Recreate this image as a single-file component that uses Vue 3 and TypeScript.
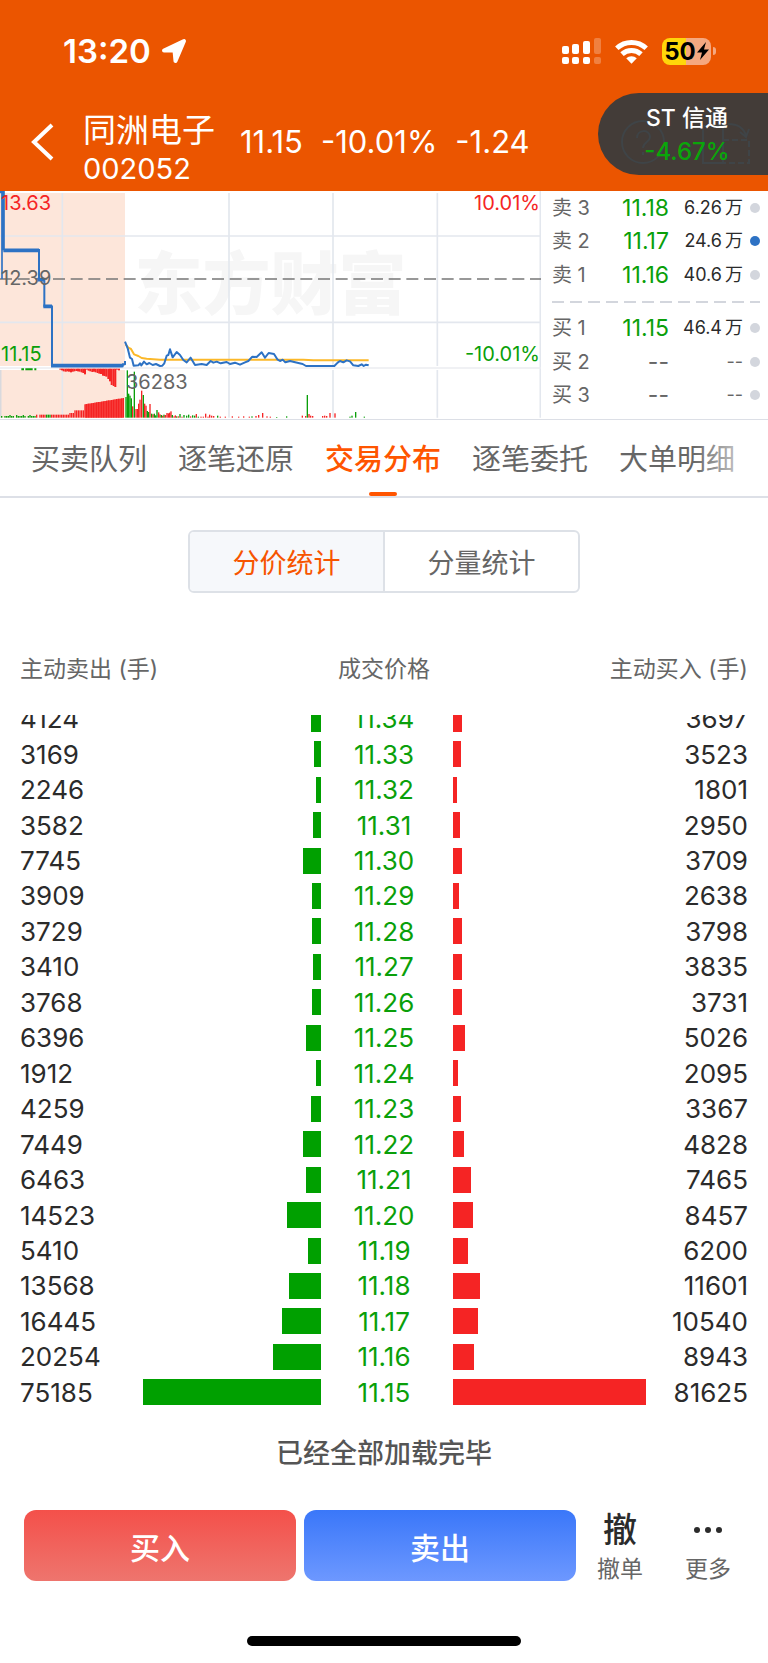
<script setup lang="ts">
interface Level {
  name: string
  price: string
  volume: string
  unit?: string
  active?: boolean
}

interface PriceRow {
  sell: number
  price: string
  buy: number
}

interface Bar {
  x: number
  h: number
  up: boolean
}

const asks: Level[] = [
  { name: '卖 3', price: '11.18', volume: '6.26', unit: '万' },
  { name: '卖 2', price: '11.17', volume: '24.6', unit: '万', active: true },
  { name: '卖 1', price: '11.16', volume: '40.6', unit: '万' },
]

const bids: Level[] = [
  { name: '买 1', price: '11.15', volume: '46.4', unit: '万' },
  { name: '买 2', price: '--', volume: '--' },
  { name: '买 3', price: '--', volume: '--' },
]

const tabs: string[] = ['买卖队列', '逐笔还原', '交易分布', '逐笔委托', '大单明细']
const activeTab = '交易分布'

const rows: PriceRow[] = [
  { sell: 4124, price: '11.34', buy: 3697 },
  { sell: 3169, price: '11.33', buy: 3523 },
  { sell: 2246, price: '11.32', buy: 1801 },
  { sell: 3582, price: '11.31', buy: 2950 },
  { sell: 7745, price: '11.30', buy: 3709 },
  { sell: 3909, price: '11.29', buy: 2638 },
  { sell: 3729, price: '11.28', buy: 3798 },
  { sell: 3410, price: '11.27', buy: 3835 },
  { sell: 3768, price: '11.26', buy: 3731 },
  { sell: 6396, price: '11.25', buy: 5026 },
  { sell: 1912, price: '11.24', buy: 2095 },
  { sell: 4259, price: '11.23', buy: 3367 },
  { sell: 7449, price: '11.22', buy: 4828 },
  { sell: 6463, price: '11.21', buy: 7465 },
  { sell: 14523, price: '11.20', buy: 8457 },
  { sell: 5410, price: '11.19', buy: 6200 },
  { sell: 13568, price: '11.18', buy: 11601 },
  { sell: 16445, price: '11.17', buy: 10540 },
  { sell: 20254, price: '11.16', buy: 8943 },
  { sell: 75185, price: '11.15', buy: 81625 },
]

const peak = Math.max(...rows.map((r) => Math.max(r.sell, r.buy)))
const barWidth = (value: number) => ({ width: `${(value / peak) * 100}%` })

// Chart space: three units per pixel, volume baseline at y = 698.
const auctionBars: Bar[] = []
for (let x = 3; x < 372; x += 5) {
  if (x < 104) {
    if (x % 7 !== 1) auctionBars.push({ x, h: x % 4 === 0 ? 8 : 5, up: false })
  } else if (x < 208) {
    if (x !== 113) auctionBars.push({ x, h: 9, up: x < 138 || x > 148 })
  } else if (x < 253) {
    auctionBars.push({ x, h: x < 221 ? 14 : 22, up: true })
  } else {
    auctionBars.push({ x, h: 40 + Math.round(((x - 253) * 19) / 115), up: true })
  }
}

const unmatchedDepths: number[] = [
  3, 5, 8, 9, 8, 9, 11, 9, 8, 7, 8, 9, 11, 13, 17, 3, 6, 8, 10, 9, 11, 13, 15, 16, 21, 22, 24, 31, 38, 49, 52, 55, 3, 5,
]
const unmatchedBars: Bar[] = unmatchedDepths.map((h, i) => ({ x: 178 + i * 5 + Math.floor(i / 3), h, up: true }))

const tradeBars: Bar[] = [
  [378, 62, 0], [382, 142, 0], [386, 72, 0], [390, 66, 0], [394, 58, 0], [398, 34, 1], [403, 138, 0], [408, 26, 1],
  [412, 26, 1], [416, 42, 1], [420, 54, 1], [425, 81, 1], [430, 68, 0], [434, 42, 1], [438, 36, 1], [442, 20, 0],
  [446, 17, 0], [450, 41, 1], [455, 12, 0], [459, 10, 1], [463, 12, 0], [467, 7, 0], [471, 23, 0], [476, 16, 1],
  [480, 10, 1], [484, 8, 0], [488, 6, 1], [492, 9, 0], [496, 8, 1], [501, 14, 1], [505, 13, 1], [509, 15, 1],
  [513, 19, 1], [517, 8, 0], [522, 4, 1], [526, 7, 1], [530, 4, 0], [535, 4, 1], [540, 11, 0], [546, 3, 1],
  [552, 8, 0], [560, 6, 0], [566, 9, 0], [572, 4, 1], [578, 7, 0], [584, 6, 0], [589, 11, 1], [595, 3, 0],
  [603, 3, 1], [610, 3, 1], [617, 12, 1], [624, 3, 1], [629, 9, 1], [635, 6, 1], [641, 5, 1], [653, 6, 0],
  [661, 3, 1], [676, 3, 1], [697, 4, 1], [716, 3, 1], [731, 4, 1], [748, 3, 1], [756, 4, 0], [768, 5, 1],
  [776, 8, 1], [788, 14, 1], [801, 4, 1], [811, 3, 1], [830, 2, 0], [860, 4, 0], [907, 6, 1], [917, 5, 1],
  [922, 68, 0], [927, 11, 1], [932, 6, 1], [938, 5, 1], [968, 5, 1], [974, 6, 1], [980, 5, 1], [990, 14, 1],
  [1005, 13, 1], [1050, 3, 0], [1056, 6, 0], [1067, 17, 0], [1093, 3, 0],
].map(([x, h, up]) => ({ x, h, up: up === 1 }))

const priceLine =
  '375,470 383,490 390,518 396,522 401,542 415,541 420,535 424,541 432,530 440,538 448,534 458,540 468,537 480,543 487,542 493,535 500,512 505,510 510,493 518,517 530,501 540,510 550,525 560,532 572,518 585,540 605,537 620,540 632,528 640,533 650,530 662,535 680,531 690,537 705,533 720,539 735,532 745,528 757,515 770,516 785,502 795,518 806,504 822,507 832,523 840,528 848,524 856,532 870,528 895,534 908,537 918,543 1003,543 1013,533 1020,528 1030,532 1040,526 1050,529 1060,541 1075,543 1085,538 1091,543 1098,539 1106,541'
const averageLine =
  '377,478 385,488 393,492 402,508 415,513 425,519 440,521 480,524 910,524 940,526 1106,526'
</script>

<template>
  <div class="page">
    <header class="top">
      <div class="status">
        <div class="clock">
          <span>13:20</span>
          <svg class="arrow" viewBox="0 0 26 26" aria-hidden="true">
            <path d="M3 12.500 23 3 14.500 23 13.500 12.500z" fill="#fff" stroke="#fff" stroke-width="4" stroke-linejoin="round" />
          </svg>
        </div>
        <div class="signals">
          <svg class="cell" viewBox="0 0 39 28" aria-hidden="true">
            <g fill="#fff">
              <rect x="0" y="9" width="7" height="8" rx="2" />
              <rect x="10" y="7" width="7" height="10" rx="2" />
              <rect x="21" y="4" width="7" height="13" rx="2" />
              <rect x="0" y="20" width="7" height="7" rx="2" />
              <rect x="10" y="20" width="7" height="7" rx="2" />
              <rect x="21" y="20" width="7" height="7" rx="2" />
              <g opacity=".25">
                <rect x="32" y="1" width="7" height="16" rx="2" />
                <rect x="32" y="20" width="7" height="7" rx="2" />
              </g>
            </g>
          </svg>
          <svg class="wifi" viewBox="0 0 33 25" aria-hidden="true">
            <g fill="none" stroke="#fff" stroke-width="5">
              <path d="M1.800 9.200a21.500 21.500 0 0 1 29.400 0" />
              <path d="M7 15.200a14 14 0 0 1 19 0" />
            </g>
            <path d="M11.200 19.300a8 8 0 0 1 10.600 0L16.500 24.800z" fill="#fff" />
          </svg>
          <div class="battery">
            <span>50</span>
            <svg viewBox="0 0 12 18" aria-hidden="true"><path d="M9 0 0 10.500h5L3 18l9-10.500H7z" /></svg>
          </div>
        </div>
      </div>

      <div class="quote">
        <button class="back" type="button" aria-label="返回">
          <svg viewBox="0 0 24 40" aria-hidden="true"><path d="M21 3 3 20l18 17" fill="none" stroke="#fff" stroke-width="4" /></svg>
        </button>
        <h1 class="stock">
          <span class="name">同洲电子</span>
          <span class="code">002052</span>
        </h1>
        <p class="figures"><span>11.15</span><span>-10.01%</span><span>-1.24</span></p>
      </div>

      <a class="pill" href="#st">
        <svg class="ghost" viewBox="0 0 130 46" aria-hidden="true">
          <g fill="none" stroke="#3f4447" stroke-width="2">
            <circle cx="23" cy="23" r="21" />
            <path d="M17 19c0-9 13-9 13-1 0 5-7 5-7 11M23 33v3" />
            <path d="M83 7h20v37H83z" />
            <path d="M103 21h26v23h-26" stroke-dasharray="6 3" />
            <path d="M108 5c9 0 16 4 18 12m-6-4 6 5 3-8" />
          </g>
        </svg>
        <span class="pill-name">ST 信通</span>
        <span class="pill-change">-4.67%</span>
      </a>
    </header>

    <section class="market">
      <div class="chart">
        <span class="mark">东方财富</span>
        <svg viewBox="0 18 1623 684" aria-hidden="true">
          <rect x="0" y="24" width="375" height="519" fill="#fde6da" />
          <rect x="0" y="555" width="375" height="143" fill="#fde6da" />
          <g stroke="#e3e7ee" stroke-width="5">
            <path d="M187 24V543M187 555V698M687 24V543M687 555V698M999 24V543M999 555V698M1312 24V543M1312 555V698M1621 18V698" />
            <path d="M0 153H1623M0 412H1623" />
            <path d="M0 549H1623" stroke="#ebedf1" />
            <path d="M2 555V698" stroke="#d9d9dd" />
          </g>
          <path d="M0 282H1623" stroke="#777" stroke-width="5" stroke-dasharray="36 17" />
          <g>
            <rect v-for="b in auctionBars" :key="'a' + b.x" :x="b.x" :y="698 - b.h" width="4" :height="b.h" :fill="b.up ? '#f52424' : '#0a9f0a'" />
            <path d="M255 698V658L370 640V698z" fill="#f52424" opacity=".7" />
            <rect v-for="b in unmatchedBars" :key="'u' + b.x" :x="b.x" y="551" width="6" :height="b.h" fill="#f52424" />
            <path d="M64 553H72M76 553H98M103 553H109" stroke="#0a9f0a" stroke-width="6" />
            <rect v-for="b in tradeBars" :key="'t' + b.x" :x="b.x - 2" :y="698 - b.h" width="4" :height="b.h" :fill="b.up ? '#f52424' : '#0a9f0a'" />
          </g>
          <g fill="none" stroke="#2d72c4" stroke-linejoin="round">
            <path d="M6 20V282" stroke-width="5" />
            <path d="M0 20H10V196" stroke-width="9" />
            <path d="M10 196H117M112 284H133M130 364H156M153 542H366V538" stroke-width="11" />
            <path d="M117 192V284H133V364H156V542M366 538H375V528" stroke-width="6" />
            <polyline :points="averageLine" stroke="#fbb829" stroke-width="6" />
            <polyline :points="priceLine" stroke-width="6" />
          </g>
        </svg>
        <span class="label high">13.63</span>
        <span class="label mid">12.39</span>
        <span class="label low">11.15</span>
        <span class="label high right">10.01%</span>
        <span class="label low right">-10.01%</span>
        <span class="label volume">36283</span>
      </div>

      <div class="book">
        <div v-for="l in asks" :key="l.name" class="level">
          <span class="side">{{ l.name }}</span>
          <span class="price">{{ l.price }}</span>
          <span class="lots">{{ l.volume }}<i>{{ l.unit }}</i></span>
          <span class="dot" :class="{ on: l.active }"></span>
        </div>
        <svg class="split" aria-hidden="true"><line x1="0" y1="1" x2="100%" y2="1" stroke="#d3d6dd" stroke-width="2" stroke-dasharray="12 6" /></svg>
        <div v-for="l in bids" :key="l.name" class="level">
          <span class="side">{{ l.name }}</span>
          <span class="price" :class="{ empty: !l.unit }">{{ l.price }}</span>
          <span class="lots" :class="{ empty: !l.unit }">{{ l.volume }}<i v-if="l.unit">{{ l.unit }}</i></span>
          <span class="dot"></span>
        </div>
      </div>
    </section>

    <nav class="tabs">
      <button v-for="t in tabs" :key="t" type="button" :class="{ active: t === activeTab }">{{ t }}</button>
    </nav>

    <main class="content">
      <div class="segment">
        <button type="button" class="chosen">分价统计</button>
        <button type="button">分量统计</button>
      </div>

      <table class="stats">
        <thead>
          <tr>
            <th class="sell-head" colspan="2">主动卖出 (手)</th>
            <th class="price-head">成交价格</th>
            <th class="buy-head" colspan="2">主动买入 (手)</th>
          </tr>
        </thead>
        <tbody>
          <tr v-for="r in rows" :key="r.price">
            <td class="num">{{ r.sell }}</td>
            <td class="track sell"><div class="bar" :style="barWidth(r.sell)"></div></td>
            <td class="deal">{{ r.price }}</td>
            <td class="track buy"><div class="bar" :style="barWidth(r.buy)"></div></td>
            <td class="num end">{{ r.buy }}</td>
          </tr>
        </tbody>
      </table>

      <p class="done">已经全部加载完毕</p>
    </main>

    <footer class="actions">
      <button type="button" class="trade buy-btn">买入</button>
      <button type="button" class="trade sell-btn">卖出</button>
      <button type="button" class="tool"><b>撤</b><span>撤单</span></button>
      <button type="button" class="tool">
        <svg viewBox="0 0 30 34" aria-hidden="true"><g fill="#2b2b2b"><circle cx="4" cy="17" r="3" /><circle cx="15" cy="17" r="3" /><circle cx="26" cy="17" r="3" /></g></svg>
        <span>更多</span>
      </button>
    </footer>
    <div class="home"></div>
  </div>
</template>

<style>
body {
  margin: 0;
  background: #fff;
}
</style>

<style scoped>
.page {
  font-family: Inter, "Noto Sans CJK SC", sans-serif;
  color: #2b2b2b;
  background: #fff;
  overflow: hidden;
}

button {
  font: inherit;
  color: inherit;
  border: 0;
  padding: 0;
  background: none;
}

.top {
  position: relative;
  height: 191px;
  background: #eb5500;
  color: #fff;
}

.status {
  display: flex;
  justify-content: space-between;
  align-items: center;
  padding: 31px 52px 0 63px;
  height: 40px;
}

.clock {
  display: flex;
  align-items: center;
  gap: 10px;
  font-size: 33px;
  font-weight: 600;
}

.arrow {
  width: 26px;
  height: 26px;
}

.signals {
  display: flex;
  align-items: center;
  gap: 14px;
}

.cell {
  width: 39px;
  height: 28px;
}

.wifi {
  width: 33px;
  height: 25px;
}

.battery {
  position: relative;
  display: flex;
  align-items: center;
  justify-content: center;
  gap: 1px;
  width: 49px;
  height: 27px;
  margin-right: 5px;
  border-radius: 8px;
  background: linear-gradient(90deg, #ffd60a 50%, #f5a880 50%);
  color: #000;
  font-size: 24px;
  font-weight: 700;
}

.battery::after {
  content: "";
  position: absolute;
  right: -5px;
  width: 3px;
  height: 8px;
  border-radius: 0 4px 4px 0;
  background: #f5a880;
}

.battery svg {
  width: 12px;
  height: 18px;
}

.quote {
  display: flex;
  align-items: flex-start;
  padding: 39px 0 0 31px;
}

.back {
  width: 52px;
  height: 64px;
  display: flex;
  align-items: center;
}

.back svg {
  width: 24px;
  height: 40px;
}

.stock {
  margin: 0;
  width: 157px;
  display: flex;
  flex-direction: column;
  font-weight: 400;
}

.name {
  font-size: 33px;
  line-height: 40px;
}

.code {
  font-size: 29px;
  line-height: 38px;
}

.figures {
  display: flex;
  gap: 18px;
  margin: 0;
  font-size: 31px;
  line-height: 64px;
}

.pill {
  position: absolute;
  right: 0;
  top: 93px;
  width: 170px;
  height: 82px;
  box-sizing: border-box;
  padding: 9px 0 7px 8px;
  border-radius: 41px 0 0 41px;
  background: #433c38;
  color: #fff;
  text-decoration: none;
  display: flex;
  flex-direction: column;
  align-items: center;
  font-size: 23px;
  font-weight: 500;
  line-height: 33px;
}

.ghost {
  position: absolute;
  left: 22px;
  top: 26px;
  width: 130px;
  height: 46px;
}

.pill-name,
.pill-change {
  position: relative;
}

.pill-change {
  color: #0aa60a;
  font-size: 24px;
}

.market {
  display: grid;
  grid-template-columns: 541fr 227fr;
  border-bottom: 1px solid #dcdfe6;
}

.chart {
  position: relative;
}

.chart svg {
  position: relative;
  display: block;
  width: 100%;
}

.mark {
  position: absolute;
  inset: 0 0 51px 0;
  display: flex;
  align-items: center;
  justify-content: center;
  color: #f6f6f6;
  font-size: 68px;
  font-weight: 900;
}

.label {
  position: absolute;
  left: 1px;
  font-size: 20px;
  line-height: 24px;
  color: #666;
}

.label.high {
  top: 0;
  color: #f52424;
}

.label.mid {
  top: 75px;
}

.label.low {
  top: 151px;
  color: #0a9f0a;
}

.label.right {
  left: auto;
  right: 1px;
}

.label.volume {
  left: 126px;
  top: 179px;
}

.book {
  display: flex;
  flex-direction: column;
  padding: 0 8px 7px 11px;
}

.level {
  flex: 1;
  display: grid;
  grid-template-columns: 36px 81fr 74fr 17px;
  align-items: center;
  line-height: 30px;
}

.side {
  font-size: 20px;
  color: #666;
  white-space: nowrap;
}

.price {
  font-size: 23px;
  color: #0a9f0a;
  text-align: right;
}

.lots {
  font-size: 18px;
  text-align: right;
}

.lots i {
  font-style: normal;
  margin-left: 3px;
}

.book .empty {
  color: #666;
}

.dot {
  width: 10px;
  height: 10px;
  border-radius: 5px;
  background: #d3d6dd;
  justify-self: end;
}

.dot.on {
  background: #2d72c4;
}

.split {
  width: 100%;
  height: 2px;
  margin: 9px 0;
}

.tabs {
  position: relative;
  display: flex;
  gap: 31px;
  padding-left: 31px;
  height: 76px;
  border-bottom: 2px solid #dde0e7;
  color: #666;
  font-size: 29px;
  white-space: nowrap;
  overflow: hidden;
}

.tabs::after {
  content: "";
  position: absolute;
  right: 0;
  top: 0;
  bottom: 0;
  width: 76px;
  background: linear-gradient(90deg, rgba(255, 255, 255, 0), #fff);
}

.tabs button {
  position: relative;
  flex: none;
  padding-bottom: 2px;
}

.tabs .active {
  color: #ff5500;
  font-weight: 500;
}

.tabs .active::after {
  content: "";
  position: absolute;
  left: 50%;
  bottom: 0;
  width: 28px;
  height: 4px;
  margin-left: -14px;
  border-radius: 2px;
  background: #ff5500;
}

.segment {
  display: flex;
  box-sizing: border-box;
  width: 51%;
  height: 63px;
  margin: 32px auto 0;
  border: 2px solid #dde1e7;
  border-radius: 6px;
  overflow: hidden;
  color: #666;
  font-size: 27px;
}

.segment button {
  flex: 1;
}

.segment .chosen {
  background: #f6f8fb;
  color: #f75500;
  border-right: 2px solid #dde1e7;
}

.stats,
.stats thead {
  display: block;
}

.stats {
  margin: 60px 20px 0;
}

.stats tr {
  display: grid;
  align-items: center;
}

.stats thead tr {
  grid-template-columns: 301fr 126fr 301fr;
  height: 32px;
}

.stats th {
  padding: 0;
  color: #666;
  font-size: 23px;
  font-weight: 400;
  line-height: 32px;
  text-align: center;
}

.stats .sell-head {
  text-align: left;
}

.stats .buy-head {
  text-align: right;
}

.stats tbody {
  display: flex;
  flex-direction: column;
  height: 695px;
  margin-top: 30px;
  overflow: hidden;
}

.stats tbody tr {
  flex: 1;
  grid-template-columns: 108fr 193fr 126fr 199fr 102fr;
  font-size: 26px;
  line-height: 35px;
}

.stats tbody tr:first-child {
  margin-top: -14px;
}

.stats td {
  padding: 0;
}

.end {
  text-align: right;
}

.deal {
  color: #0a9f0a;
  text-align: center;
}

.track {
  display: flex;
}

.track.sell {
  justify-content: flex-end;
}

.stats .track.buy {
  padding-left: 6px;
}

.bar {
  height: 26px;
  background: #00a000;
}

.buy .bar {
  background: #f52424;
}

.done {
  margin: 24px 0 0;
  color: #555;
  font-size: 27px;
  font-weight: 500;
  line-height: 40px;
  text-align: center;
}

.actions {
  display: grid;
  grid-template-columns: 272fr 272fr 72fr 88fr;
  gap: 8px;
  margin-top: 36px;
  padding: 0 16px 0 24px;
}

.trade {
  height: 71px;
  border-radius: 12px;
  color: #fff;
  font-size: 30px;
  font-weight: 500;
}

.buy-btn {
  background: linear-gradient(#f4504a, #ee756e);
}

.sell-btn {
  background: linear-gradient(#3a77f9, #6d98ff);
}

.tool {
  height: 71px;
  display: flex;
  flex-direction: column;
  align-items: center;
  justify-content: space-between;
  color: #666;
  font-size: 23px;
  line-height: 24px;
}

.tool b {
  color: #2b2b2b;
  font-size: 34px;
  font-weight: 500;
  line-height: 40px;
}

.tool svg {
  width: 30px;
  height: 34px;
  margin-top: 3px;
}

.home {
  width: 274px;
  height: 10px;
  margin: 55px auto 17px;
  border-radius: 5px;
  background: #000;
}
</style>
